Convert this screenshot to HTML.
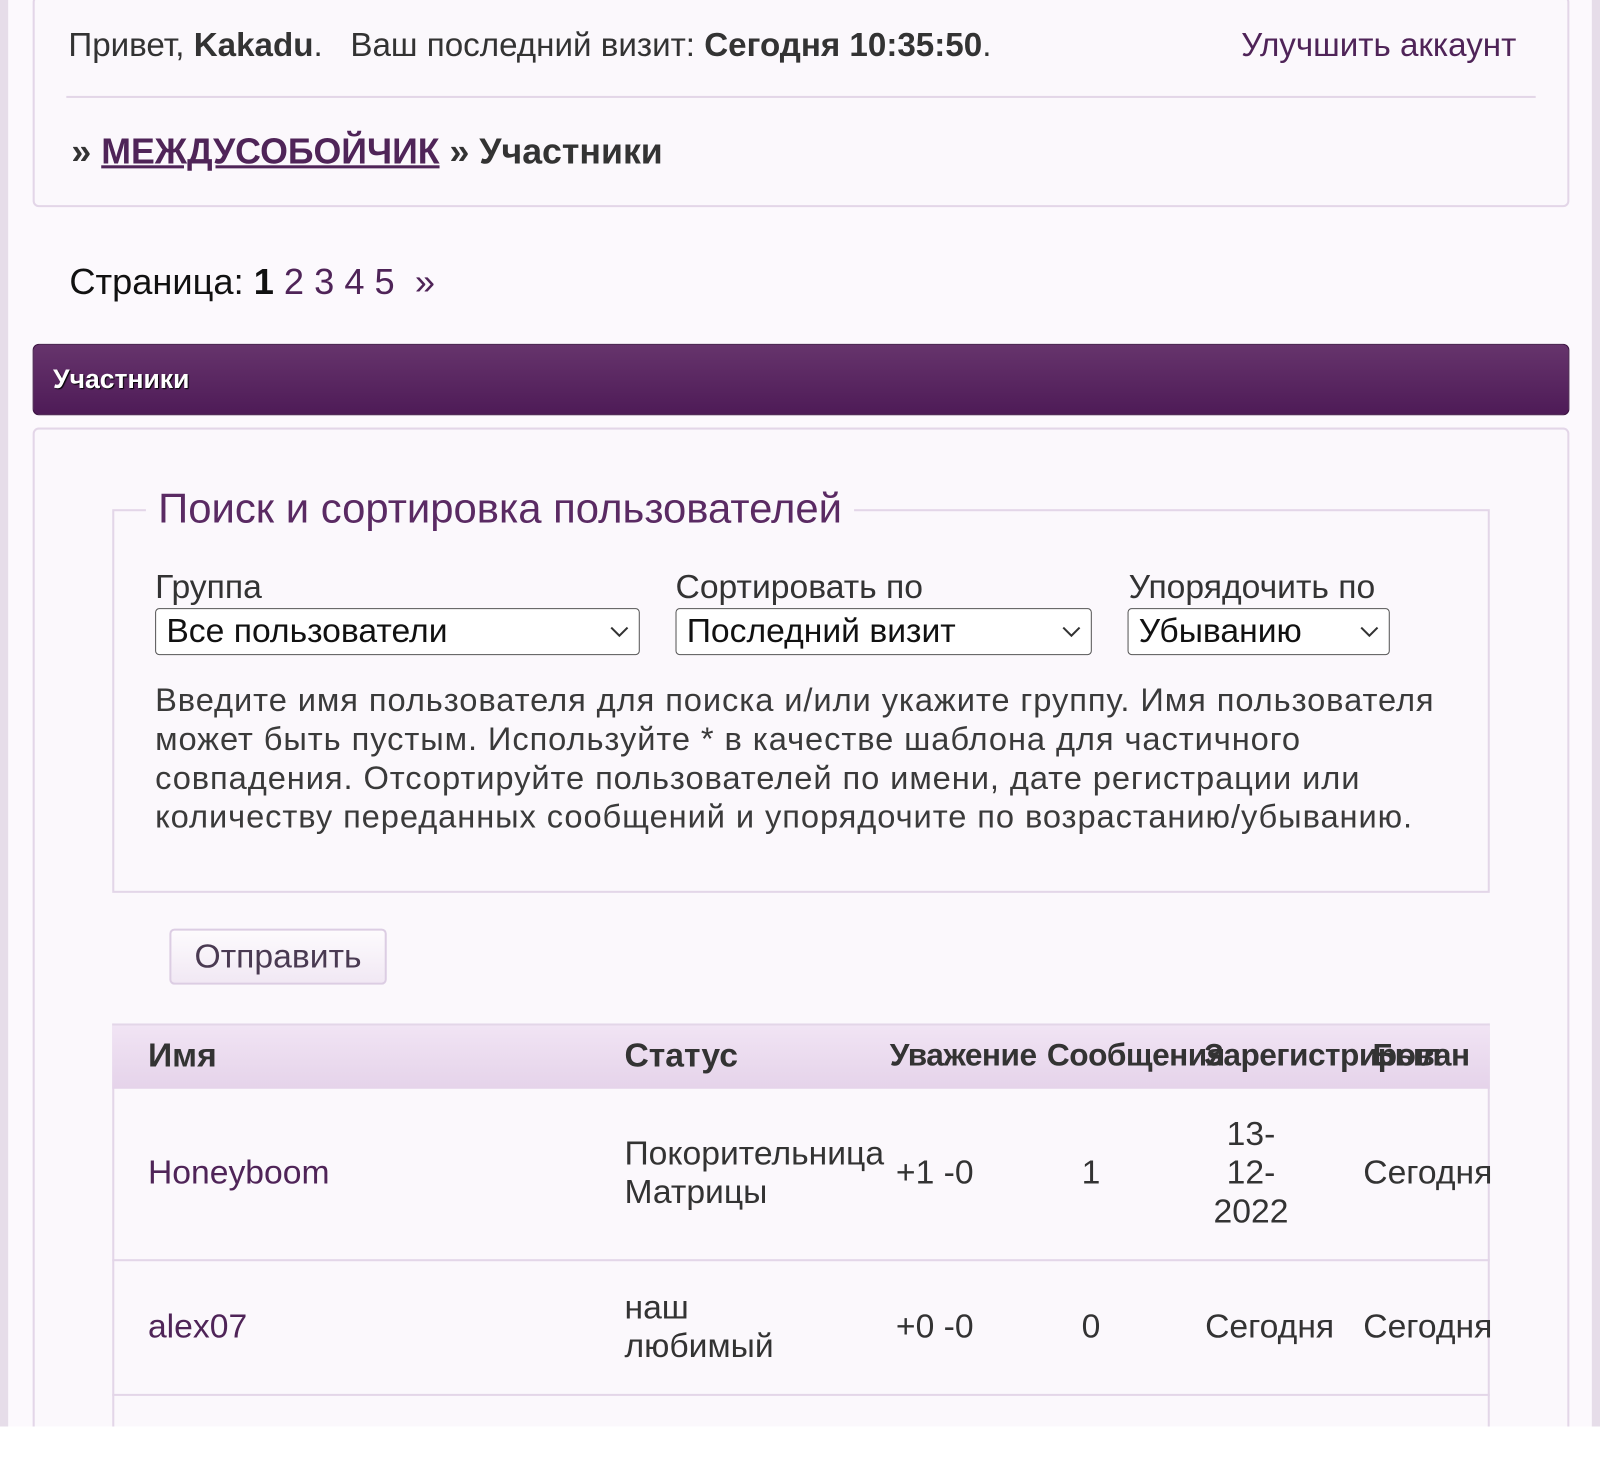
<!DOCTYPE html>
<html><head><meta charset="utf-8"><style>
*{margin:0;padding:0;box-sizing:border-box}
body{width:1600px;height:1430px;background:#fff;font-family:"Liberation Sans",sans-serif;color:#333;position:relative;overflow:hidden}
#w{position:absolute;left:0;top:0;width:1568px;height:1402px;transform:scale(1.0204);transform-origin:0 0}
.a{position:absolute;white-space:nowrap}
.pg{position:absolute;left:0;top:0;width:1568px;height:1398px;background:#fcf9fd}
.ls{position:absolute;left:0;top:0;width:8px;height:1398px;background:#e6dde9}
.rs{position:absolute;left:1560px;top:0;width:8px;height:1398px;background:#e6dde9}
.box{position:absolute;border:2px solid #e3d6e8;border-radius:6px;background:#fbf8fc}
.purp{color:#4f2458}
.sel{position:absolute;height:46px;border:1.5px solid #555;border-radius:4px;background:#fff;font-size:33px;color:#111;padding:2px 0 0 10px;line-height:38px}
.sel svg{position:absolute;right:10px;top:16px}
</style></head><body>
<div id="w">
<div class="pg"></div><div class="ls"></div><div class="rs"></div>

<div class="box" style="left:32px;top:-4px;width:1506px;height:207px"></div>
<div class="a" style="left:67px;top:26px;font-size:32.5px;color:#333">Привет, <b>Kakadu</b>. &nbsp; Ваш последний визит: <b>Сегодня 10:35:50</b>.</div>
<div class="a purp" style="right:82px;top:26px;font-size:32.5px">Улучшить аккаунт</div>
<div class="a" style="left:65px;top:94px;width:1440px;height:2px;background:#e3d6e8"></div>
<div class="a" style="left:70px;top:129px;font-size:35px;font-weight:bold;color:#333">» <span class="purp" style="text-decoration:underline">МЕЖДУСОБОЙЧИК</span> » Участники</div>

<div class="a" style="left:68px;top:256px;font-size:35.5px;color:#111">Страница: <b>1</b> <span class="purp">2 3 4 5 &nbsp;»</span></div>

<div class="a" style="left:32px;top:337px;width:1506px;height:70px;border-radius:6px;background:linear-gradient(#66346c,#4e1b57);border:1px solid #3a1240"></div>
<div class="a" style="left:52px;top:356px;font-size:26px;font-weight:bold;color:#fff;text-shadow:1px 1px 1px #000">Участники</div>

<div class="box" style="left:32px;top:419px;width:1506px;height:1000px"></div>

<div class="a" style="left:110px;top:499px;width:1350px;height:376px;border:2px solid #e3d6e8"></div>
<div class="a" style="left:143px;top:475px;font-size:41px;color:#5a2a63;background:#fbf8fc;padding:0 12px">Поиск и сортировка пользователей</div>

<div class="a" style="left:152px;top:556px;font-size:33px;color:#333">Группа</div>
<div class="a" style="left:662px;top:556px;font-size:33px;color:#333">Сортировать по</div>
<div class="a" style="left:1106px;top:556px;font-size:33px;color:#333">Упорядочить по</div>
<div class="sel" style="left:152px;top:596px;width:475px">Все пользователи<svg width="18" height="12"><path d="M1 2 L9 10 L17 2" stroke="#333" stroke-width="2" fill="none"/></svg></div>
<div class="sel" style="left:662px;top:596px;width:408px">Последний визит<svg width="18" height="12"><path d="M1 2 L9 10 L17 2" stroke="#333" stroke-width="2" fill="none"/></svg></div>
<div class="sel" style="left:1105px;top:596px;width:257px">Убыванию<svg width="18" height="12"><path d="M1 2 L9 10 L17 2" stroke="#333" stroke-width="2" fill="none"/></svg></div>

<div class="a" style="left:152px;top:667px;font-size:32px;letter-spacing:0.9px;line-height:38px;color:#3a3a3a">Введите имя пользователя для поиска и/или укажите группу. Имя пользователя<br>может быть пустым. Используйте * в качестве шаблона для частичного<br>совпадения. Отсортируйте пользователей по имени, дате регистрации или<br>количеству переданных сообщений и упорядочите по возрастанию/убыванию.</div>

<div class="a" style="left:166px;top:910px;width:213px;height:55px;border:2px solid #dccde3;border-radius:5px;background:linear-gradient(#fdfbfd,#f1e8f4);font-size:33px;color:#4a3a52;text-align:center;line-height:50px">Отправить</div>

<div class="a" style="left:110px;top:1003px;width:1350px;height:420px;border:2px solid #e3d6e8;border-top:none;background:#fbf8fc"></div>
<div class="a" style="left:110px;top:1003px;width:1350px;height:64px;background:linear-gradient(#f1e4f4,#e5d3ea);border-top:2px solid #e3d6e8"></div>
<div class="a" style="left:145px;top:1015px;font-size:33px;font-weight:bold;color:#333">Имя</div>
<div class="a" style="left:612px;top:1015px;font-size:33px;font-weight:bold;color:#333">Статус</div>
<div class="a" style="left:872px;top:1016px;font-size:31px;font-weight:bold;color:#333;letter-spacing:-0.5px">Уважение</div>
<div class="a" style="left:1026px;top:1016px;font-size:31px;font-weight:bold;color:#333;letter-spacing:-0.5px">Сообщения</div>
<div class="a" style="left:1180px;top:1016px;font-size:31px;font-weight:bold;color:#333;letter-spacing:-0.5px">Зарегистрирован</div>
<div class="a" style="left:1345px;top:1016px;font-size:31px;font-weight:bold;color:#333;letter-spacing:-0.5px">Был</div>

<div class="a purp" style="left:145px;top:1130px;font-size:33px">Honeyboom</div>
<div class="a" style="left:612px;top:1111px;font-size:33px;line-height:38px;color:#333">Покорительница<br>Матрицы</div>
<div class="a" style="left:878px;top:1130px;font-size:33px;color:#333">+1 -0</div>
<div class="a" style="left:1060px;top:1130px;font-size:33px;color:#333">1</div>
<div class="a" style="left:1185px;top:1092px;font-size:33px;line-height:38px;color:#333;text-align:center;width:82px">13-<br>12-<br>2022</div>
<div class="a" style="left:1336px;top:1130px;font-size:33px;color:#333">Сегодня</div>
<div class="a" style="left:110px;top:1234px;width:1350px;height:2px;background:#e3d6e8"></div>

<div class="a purp" style="left:145px;top:1281px;font-size:33px">alex07</div>
<div class="a" style="left:612px;top:1262px;font-size:33px;line-height:38px;color:#333">наш<br>любимый</div>
<div class="a" style="left:878px;top:1281px;font-size:33px;color:#333">+0 -0</div>
<div class="a" style="left:1060px;top:1281px;font-size:33px;color:#333">0</div>
<div class="a" style="left:1181px;top:1281px;font-size:33px;color:#333">Сегодня</div>
<div class="a" style="left:1336px;top:1281px;font-size:33px;color:#333">Сегодня</div>
<div class="a" style="left:110px;top:1366px;width:1350px;height:2px;background:#e3d6e8"></div>

<div class="a" style="left:0;top:1398px;width:1568px;height:40px;background:#fff"></div>
</div>
</body></html>
